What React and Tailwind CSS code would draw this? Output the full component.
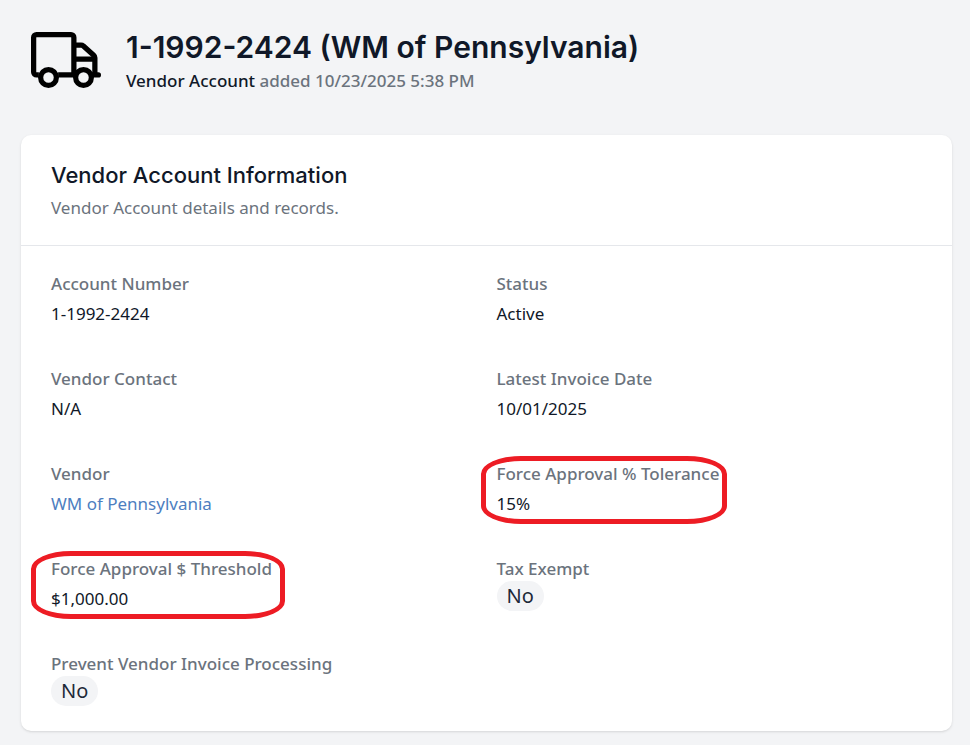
const details = [
  { label: "Account Number", value: "1-1992-2424" },
  { label: "Status", value: "Active" },
  { label: "Vendor Contact", value: "N/A" },
  { label: "Latest Invoice Date", value: "10/01/2025" },
  { label: "Vendor", value: "WM of Pennsylvania", type: "link" },
  { label: "Force Approval % Tolerance", value: "15%", ring: "-left-4 w-[246px]" },
  { label: "Force Approval $ Threshold", value: "$1,000.00", ring: "-left-5 w-[254px]" },
  { label: "Tax Exempt", value: "No", type: "badge" },
  { label: "Prevent Vendor Invoice Processing", value: "No", type: "badge" },
];

const TruckIcon = () => (
  <svg
    viewBox="0 0 640 512"
    className="h-14 w-[70px] shrink-0"
    fill="none"
    stroke="black"
    strokeWidth="48"
    strokeLinejoin="round"
    aria-hidden="true"
  >
    {/* box */}
    <path d="M72 392H50a26 26 0 0 1-26-26V50a26 26 0 0 1 26-26h316a26 26 0 0 1 26 26v342H248" />
    {/* cab */}
    <path d="M392 120h66c8 0 15 3 21 8l94 84c7 6 11 14 11 23v157" />
    <path d="M392 248h192" />
    <path d="M560 392h56" strokeLinecap="round" />
    {/* wheels */}
    <circle cx="160" cy="416" r="72" />
    <circle cx="480" cy="416" r="72" />
  </svg>
);

const Value = ({ type, value }) => {
  if (type === "badge") {
    return (
      <dd className="flex">
        <span className="rounded-full bg-gray-100 px-[10px] text-[20px] leading-[30px] text-gray-800">{value}</span>
      </dd>
    );
  }
  return (
    <dd className="mt-[5px] text-gray-900">
      {type === "link" ? <a href="#vendor" className="text-[#4d7ebf]">{value}</a> : value}
    </dd>
  );
};

const Detail = ({ label, value, type, ring }) => (
  <div className="relative">
    <dt className="font-medium text-[#6b737d]">{label}</dt>
    <Value type={type} value={value} />
    {ring && (
      <span
        className={`pointer-events-none absolute -top-[5px] h-[68px] rounded-[40px/18px] border-[5px] border-[#ed1c24] ${ring}`}
      />
    )}
  </div>
);

const App = () => {
  return (
    <div className="min-h-screen bg-gray-100 pt-[27px] pr-[18px] pb-[14px] pl-[21px] font-['Noto_Sans',sans-serif] text-[17px] leading-[25px]">
      {/* page header */}
      <header className="flex items-center gap-[25px] px-[10px]">
        <TruckIcon />
        <div>
          <h1 className="font-['Inter',sans-serif] text-[30px] leading-10 font-semibold text-gray-900">
            1-1992-2424 (WM of Pennsylvania)
          </h1>
          <p className="mt-px font-medium text-[#6b737d]">
            <span className="text-gray-900">Vendor Account</span> added 10/23/2025 5:38 PM
          </p>
        </div>
      </header>

      {/* account details */}
      <section className="mt-[42px] rounded-[10px] bg-white shadow-sm">
        <div className="border-b border-gray-200 px-[30px] py-[25px]">
          <h2 className="font-['Inter',sans-serif] text-[22px] leading-[30px] font-medium text-gray-900">
            Vendor Account Information
          </h2>
          <p className="mt-[5px] text-[#6b737d]">Vendor Account details and records.</p>
        </div>
        <dl className="grid grid-cols-2 gap-x-5 gap-y-10 px-[30px] py-[25px]">
          {details.map((item) => (
            <Detail key={item.label} {...item} />
          ))}
        </dl>
      </section>
    </div>
  );
};

export default App;
